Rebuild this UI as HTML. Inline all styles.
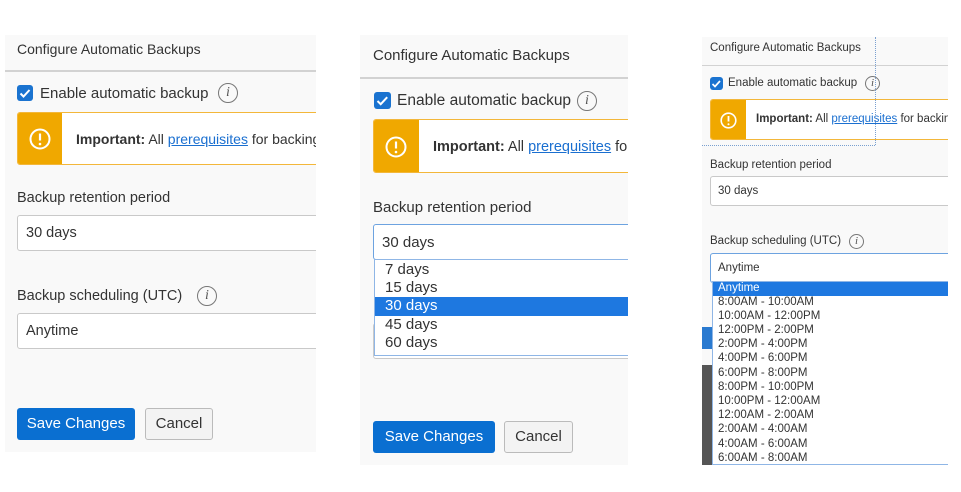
<!DOCTYPE html>
<html><head><style>
*{box-sizing:border-box;margin:0;padding:0}
body{width:961px;height:492px;background:#fff;position:relative;overflow:hidden;font-family:"Liberation Sans",Arial,sans-serif;color:#333}
.a{position:absolute;white-space:nowrap}
.panel{position:absolute;background:#f9f9f9;overflow:hidden}
.inp{position:absolute;background:#fff;border:1px solid #c9c9c9;border-radius:3px}
.cb{position:absolute;background:#1a73d0;border-radius:3px}
.info{position:absolute;border:1px solid #777;border-radius:50%;color:#555;font-family:"Liberation Serif",serif;font-style:italic;text-align:center}
.warn{position:absolute;background:#fff;border:1px solid #f3b73a;border-radius:3px;overflow:hidden}
.warn .o{position:absolute;left:0;top:0;bottom:0;background:#f0a800}
.btn{position:absolute;background:#0a6fd1;color:#fff;border-radius:3px;text-align:center}
.cn{position:absolute;background:#f3f3f3;border:1px solid #bbb;border-radius:3px;text-align:center;color:#333}
a{color:#1a6fd0;text-decoration:underline}
</style></head><body>

<!-- Panel 1 -->
<div class="panel" style="left:5px;top:35px;width:311px;height:417px">
<div class="a" style="left:12px;top:6px;font-size:14px">Configure Automatic Backups</div>
<div class="a" style="left:0;top:35px;width:311px;height:2px;background:#d2d2d2"></div>
<div class="cb" style="left:12px;top:50px;width:16px;height:16px"><svg width="16" height="16"><path d="M3.5 8.5l3 3 6-6.5" stroke="#fff" stroke-width="2" fill="none"/></svg></div>
<div class="a" style="left:35px;top:50px;font-size:15px">Enable automatic backup</div>
<div class="info" style="left:213px;top:48px;width:20px;height:20px;font-size:14px;line-height:18px">i</div>
<div class="warn" style="left:12px;top:77px;width:310px;height:53px"><div class="o" style="width:44px"></div>
<svg class="a" style="left:11px;top:15px" width="22" height="22"><circle cx="11" cy="11" r="9.5" stroke="#fff" stroke-width="2" fill="none"/><path d="M11 5.5v7" stroke="#fff" stroke-width="2.2"/><circle cx="11" cy="16" r="1.3" fill="#fff"/></svg>
<div class="a" style="left:58px;top:18px;font-size:14px"><b>Important:</b> All <a>prerequisites</a> for backing</div></div>
<div class="a" style="left:12px;top:155px;font-size:14.5px">Backup retention period</div>
<div class="inp" style="left:12px;top:180px;width:310px;height:36px"><div class="a" style="left:8px;top:9px;font-size:14.5px">30 days</div></div>
<div class="a" style="left:12px;top:253px;font-size:14.5px">Backup scheduling (UTC)</div>
<div class="info" style="left:192px;top:251px;width:20px;height:20px;font-size:14px;line-height:18px">i</div>
<div class="inp" style="left:12px;top:278px;width:310px;height:36px"><div class="a" style="left:8px;top:9px;font-size:14.5px">Anytime</div></div>
<div class="btn" style="left:12px;top:373px;width:118px;height:32px;font-size:15px;line-height:32px">Save Changes</div>
<div class="cn" style="left:140px;top:373px;width:68px;height:32px;font-size:15px;line-height:30px">Cancel</div>
</div>

<!-- Panel 2 -->
<div class="panel" style="left:360px;top:35px;width:268px;height:430px">
<div class="a" style="left:13px;top:12px;font-size:15px">Configure Automatic Backups</div>
<div class="a" style="left:0;top:42px;width:268px;height:2px;background:#d2d2d2"></div>
<div class="cb" style="left:14px;top:57px;width:17px;height:17px"><svg width="17" height="17"><path d="M3.5 9l3.2 3.2 6.5-7" stroke="#fff" stroke-width="2" fill="none"/></svg></div>
<div class="a" style="left:37px;top:57px;font-size:15.5px">Enable automatic backup</div>
<div class="info" style="left:217px;top:56px;width:20px;height:20px;font-size:14px;line-height:18px">i</div>
<div class="warn" style="left:13px;top:84px;width:290px;height:54px"><div class="o" style="width:45px"></div>
<svg class="a" style="left:11px;top:16px" width="22" height="22"><circle cx="11" cy="11" r="9.5" stroke="#fff" stroke-width="2" fill="none"/><path d="M11 5.5v7" stroke="#fff" stroke-width="2.2"/><circle cx="11" cy="16" r="1.3" fill="#fff"/></svg>
<div class="a" style="left:59px;top:19px;font-size:14.5px"><b>Important:</b> All <a>prerequisites</a> for</div></div>
<div class="a" style="left:13px;top:164px;font-size:15px">Backup retention period</div>
<div class="inp" style="left:13px;top:288px;width:290px;height:36px"></div>
<div class="inp" style="left:13px;top:189px;width:290px;height:36px;border-color:#6da3e0"><div class="a" style="left:8px;top:9px;font-size:15px">30 days</div></div>
<div class="a" style="left:14px;top:224px;width:260px;height:97px;background:#fff;border:1px solid #8fb6e6;font-size:15px">
<div class="a" style="left:10px;top:1px">7 days</div>
<div class="a" style="left:10px;top:19px">15 days</div>
<div class="a" style="left:0;top:37px;width:260px;height:19px;background:#1e78e0"></div>
<div class="a" style="left:10px;top:37px;color:#fff">30 days</div>
<div class="a" style="left:10px;top:56px">45 days</div>
<div class="a" style="left:10px;top:74px">60 days</div>
</div>
<div class="btn" style="left:13px;top:386px;width:122px;height:32px;font-size:15px;line-height:32px">Save Changes</div>
<div class="cn" style="left:144px;top:386px;width:69px;height:32px;font-size:15px;line-height:30px">Cancel</div>
</div>

<!-- Panel 3 -->
<div class="panel" style="left:702px;top:37px;width:246px;height:428px">
<div class="a" style="left:8px;top:5px;font-size:11.5px">Configure Automatic Backups</div>
<div class="a" style="left:0;top:28px;width:246px;height:1px;background:#d2d2d2"></div>
<div class="cb" style="left:8px;top:40px;width:13px;height:13px"><svg width="13" height="13"><path d="M2.5 7l2.5 2.5 5-5.5" stroke="#fff" stroke-width="1.7" fill="none"/></svg></div>
<div class="a" style="left:26px;top:40px;font-size:11.5px">Enable automatic backup</div>
<div class="info" style="left:163px;top:39px;width:15px;height:15px;font-size:11px;line-height:13px">i</div>
<div class="warn" style="left:8px;top:62px;width:250px;height:41px"><div class="o" style="width:35px"></div>
<svg class="a" style="left:9px;top:12px" width="17" height="17"><circle cx="8.5" cy="8.5" r="7.3" stroke="#fff" stroke-width="1.6" fill="none"/><path d="M8.5 4v5.5" stroke="#fff" stroke-width="1.8"/><circle cx="8.5" cy="12.3" r="1" fill="#fff"/></svg>
<div class="a" style="left:45px;top:13px;font-size:11.5px"><b>Important:</b> All <a>prerequisites</a> for backing</div></div>
<div class="a" style="left:0;top:108px;width:173px;border-top:1px dotted #7aa0d0"></div>
<div class="a" style="left:173px;top:0;height:108px;border-left:1px dotted #7aa0d0"></div>
<div class="a" style="left:8px;top:122px;font-size:11.5px">Backup retention period</div>
<div class="inp" style="left:8px;top:139px;width:250px;height:30px"><div class="a" style="left:7px;top:8px;font-size:11.5px">30 days</div></div>
<div class="a" style="left:8px;top:198px;font-size:11.5px">Backup scheduling (UTC)</div>
<div class="info" style="left:147px;top:197px;width:15px;height:15px;font-size:11px;line-height:13px">i</div>
<div class="inp" style="left:8px;top:216px;width:250px;height:30px;border-color:#6da3e0"><div class="a" style="left:7px;top:8px;font-size:11.5px">Anytime</div></div>
<div class="a" style="left:0;top:290px;width:10px;height:22px;background:#2a7ad0"></div>
<div class="a" style="left:0;top:328px;width:10px;height:100px;background:#555"></div>
<div class="a" style="left:10px;top:244px;width:240px;height:184px;background:#fff;border:1px solid #8fb6e6;font-size:11.5px;color:#333">
<div class="a" style="left:0;top:0;width:240px;height:14px;background:#1e78e0"></div>
<div class="a" style="left:5px;top:0;color:#fff">Anytime</div>
<div class="a" style="left:5px;top:14px">8:00AM - 10:00AM</div>
<div class="a" style="left:5px;top:28px">10:00AM - 12:00PM</div>
<div class="a" style="left:5px;top:42px">12:00PM - 2:00PM</div>
<div class="a" style="left:5px;top:56px">2:00PM - 4:00PM</div>
<div class="a" style="left:5px;top:70px">4:00PM - 6:00PM</div>
<div class="a" style="left:5px;top:85px">6:00PM - 8:00PM</div>
<div class="a" style="left:5px;top:99px">8:00PM - 10:00PM</div>
<div class="a" style="left:5px;top:113px">10:00PM - 12:00AM</div>
<div class="a" style="left:5px;top:127px">12:00AM - 2:00AM</div>
<div class="a" style="left:5px;top:141px">2:00AM - 4:00AM</div>
<div class="a" style="left:5px;top:156px">4:00AM - 6:00AM</div>
<div class="a" style="left:5px;top:170px">6:00AM - 8:00AM</div>
</div>
</div>
</body></html>
